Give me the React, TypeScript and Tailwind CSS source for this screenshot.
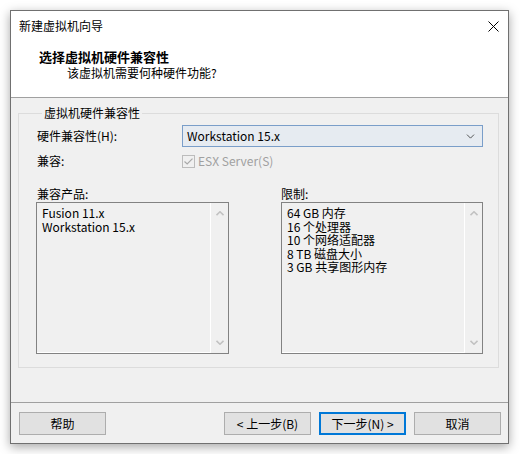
import { ChevronDown } from 'lucide-react'

const FONT = "font-['Noto_Sans_CJK_SC',sans-serif]"

function CloseIcon() {
  return (
    <svg width="11" height="11" viewBox="0 0 11 11" className="block">
      <path d="M0.5 0.5 L10.5 10.5 M10.5 0.5 L0.5 10.5" stroke="#000" strokeWidth="1" fill="none" />
    </svg>
  )
}

function ScrollArrow({ down }: { down?: boolean }) {
  return (
    <svg width="8" height="5" viewBox="0 0 8 5" className="block">
      <path
        d={down ? 'M0.5 0.8 L4 4.2 L7.5 0.8' : 'M0.5 4.2 L4 0.8 L7.5 4.2'}
        stroke="#c2c2c2"
        strokeWidth="1.6"
        fill="none"
      />
    </svg>
  )
}

function ListBox({ items, className }: { items: string[]; className: string }) {
  return (
    <div className={`flex h-[152px] border border-[#828282] bg-[#f0f0f0] ${className}`}>
      <div className="flex-1 border-b border-b-white px-[5px] pt-[3px] text-[12px] leading-[13.5px] text-black">
        {items.map((item) => (
          <div key={item} className="whitespace-nowrap">
            {item}
          </div>
        ))}
      </div>
      {/* disabled scrollbar */}
      <div className="flex w-[18px] flex-col items-center justify-between border-l border-l-white pt-[8px] pb-[8px]">
        <ScrollArrow />
        <ScrollArrow down />
      </div>
    </div>
  )
}

function Button({ label, primary }: { label: string; primary?: boolean }) {
  return (
    <div
      className={`flex h-[23px] w-[87px] items-center justify-center bg-[#e1e1e1] text-[12px] text-black ${
        primary ? 'border-2 border-[#0078d7]' : 'border border-[#adadad]'
      }`}
    >
      {label}
    </div>
  )
}

export default function App() {
  return (
    <div className={`h-[454px] w-[520px] bg-white pt-[10px] pl-[10px] ${FONT}`}>
      <div className="flex h-[434px] w-[499px] flex-col border border-[#707070] bg-white shadow-[0_3px_10px_rgba(0,0,0,0.35)]">
        {/* Title bar */}
        <div className="flex h-[30px] shrink-0 items-center justify-between pr-[9px] pl-[8px]">
          <span className="text-[12px] text-black">新建虚拟机向导</span>
          <CloseIcon />
        </div>

        {/* Header */}
        <div className="h-[57px] shrink-0 border-b border-[#a0a0a0] pt-[8px]">
          <div className="pl-[28px] text-[13px] leading-[16px] font-bold text-black">选择虚拟机硬件兼容性</div>
          <div className="pl-[56px] text-[12px] leading-[16px] text-black">该虚拟机需要何种硬件功能?</div>
        </div>

        {/* Body */}
        <div className="flex-1 bg-[#f0f0f0] pt-[7px]">
          <fieldset className="ml-[7px] w-[481px] border border-[#dcdcdc] pr-[15px] pb-[13px] pl-[17px]">
            <legend className="ml-[6px] px-[2px] text-[12px] leading-[16px] text-black">虚拟机硬件兼容性</legend>

            <div className="mt-[4px] flex h-[22px] items-center">
              <span className="w-[146px] pl-[1px] text-[12px] text-black">硬件兼容性(H):</span>
              <div className="flex h-[22px] flex-1 items-center justify-between border border-[#7a9ec9] bg-[#e6ebf1] pr-[5px] pl-[4px]">
                <span className="text-[12px] text-black">Workstation 15.x</span>
                <ChevronDown className="h-[13px] w-[13px] text-[#333]" strokeWidth={1.5} />
              </div>
            </div>

            <div className="mt-[3px] flex h-[22px] items-center">
              <span className="w-[146px] pl-[1px] text-[12px] text-black">兼容:</span>
              <div className="flex items-center gap-[3px]">
                <div className="flex h-[13px] w-[13px] items-center justify-center border border-[#bcbcbc] bg-[#f0f0f0]">
                  <svg width="9" height="7" viewBox="0 0 9 7" className="block">
                    <path d="M0.5 3.5 L3.2 6 L8.5 0.7" stroke="#a8a8a8" strokeWidth="1.2" fill="none" />
                  </svg>
                </div>
                <span className="text-[12px] text-[#a0a0a0]">ESX Server(S)</span>
              </div>
            </div>

            <div className="mt-[14px] flex gap-[52px]">
              <div className="flex flex-col">
                <span className="h-[16px] pl-[1px] text-[12px] leading-[16px] text-black">兼容产品:</span>
                <ListBox className="w-[193px]" items={['Fusion 11.x', 'Workstation 15.x']} />
              </div>
              <div className="flex flex-col">
                <span className="h-[16px] text-[12px] leading-[16px] text-black">限制:</span>
                <ListBox
                  className="w-[202px]"
                  items={['64 GB 内存', '16 个处理器', '10 个网络适配器', '8 TB 磁盘大小', '3 GB 共享图形内存']}
                />
              </div>
            </div>
          </fieldset>
        </div>

        {/* Footer buttons */}
        <div className="flex h-[41px] shrink-0 border-t border-[#a0a0a0] bg-[#f0f0f0] pt-[9px] pr-[7px] pl-[8px]">
          <Button label="帮助" />
          <div className="ml-auto flex gap-[8px]">
            <Button label="< 上一步(B)" />
            <Button label="下一步(N) >" primary />
            <Button label="取消" />
          </div>
        </div>
      </div>
    </div>
  )
}
